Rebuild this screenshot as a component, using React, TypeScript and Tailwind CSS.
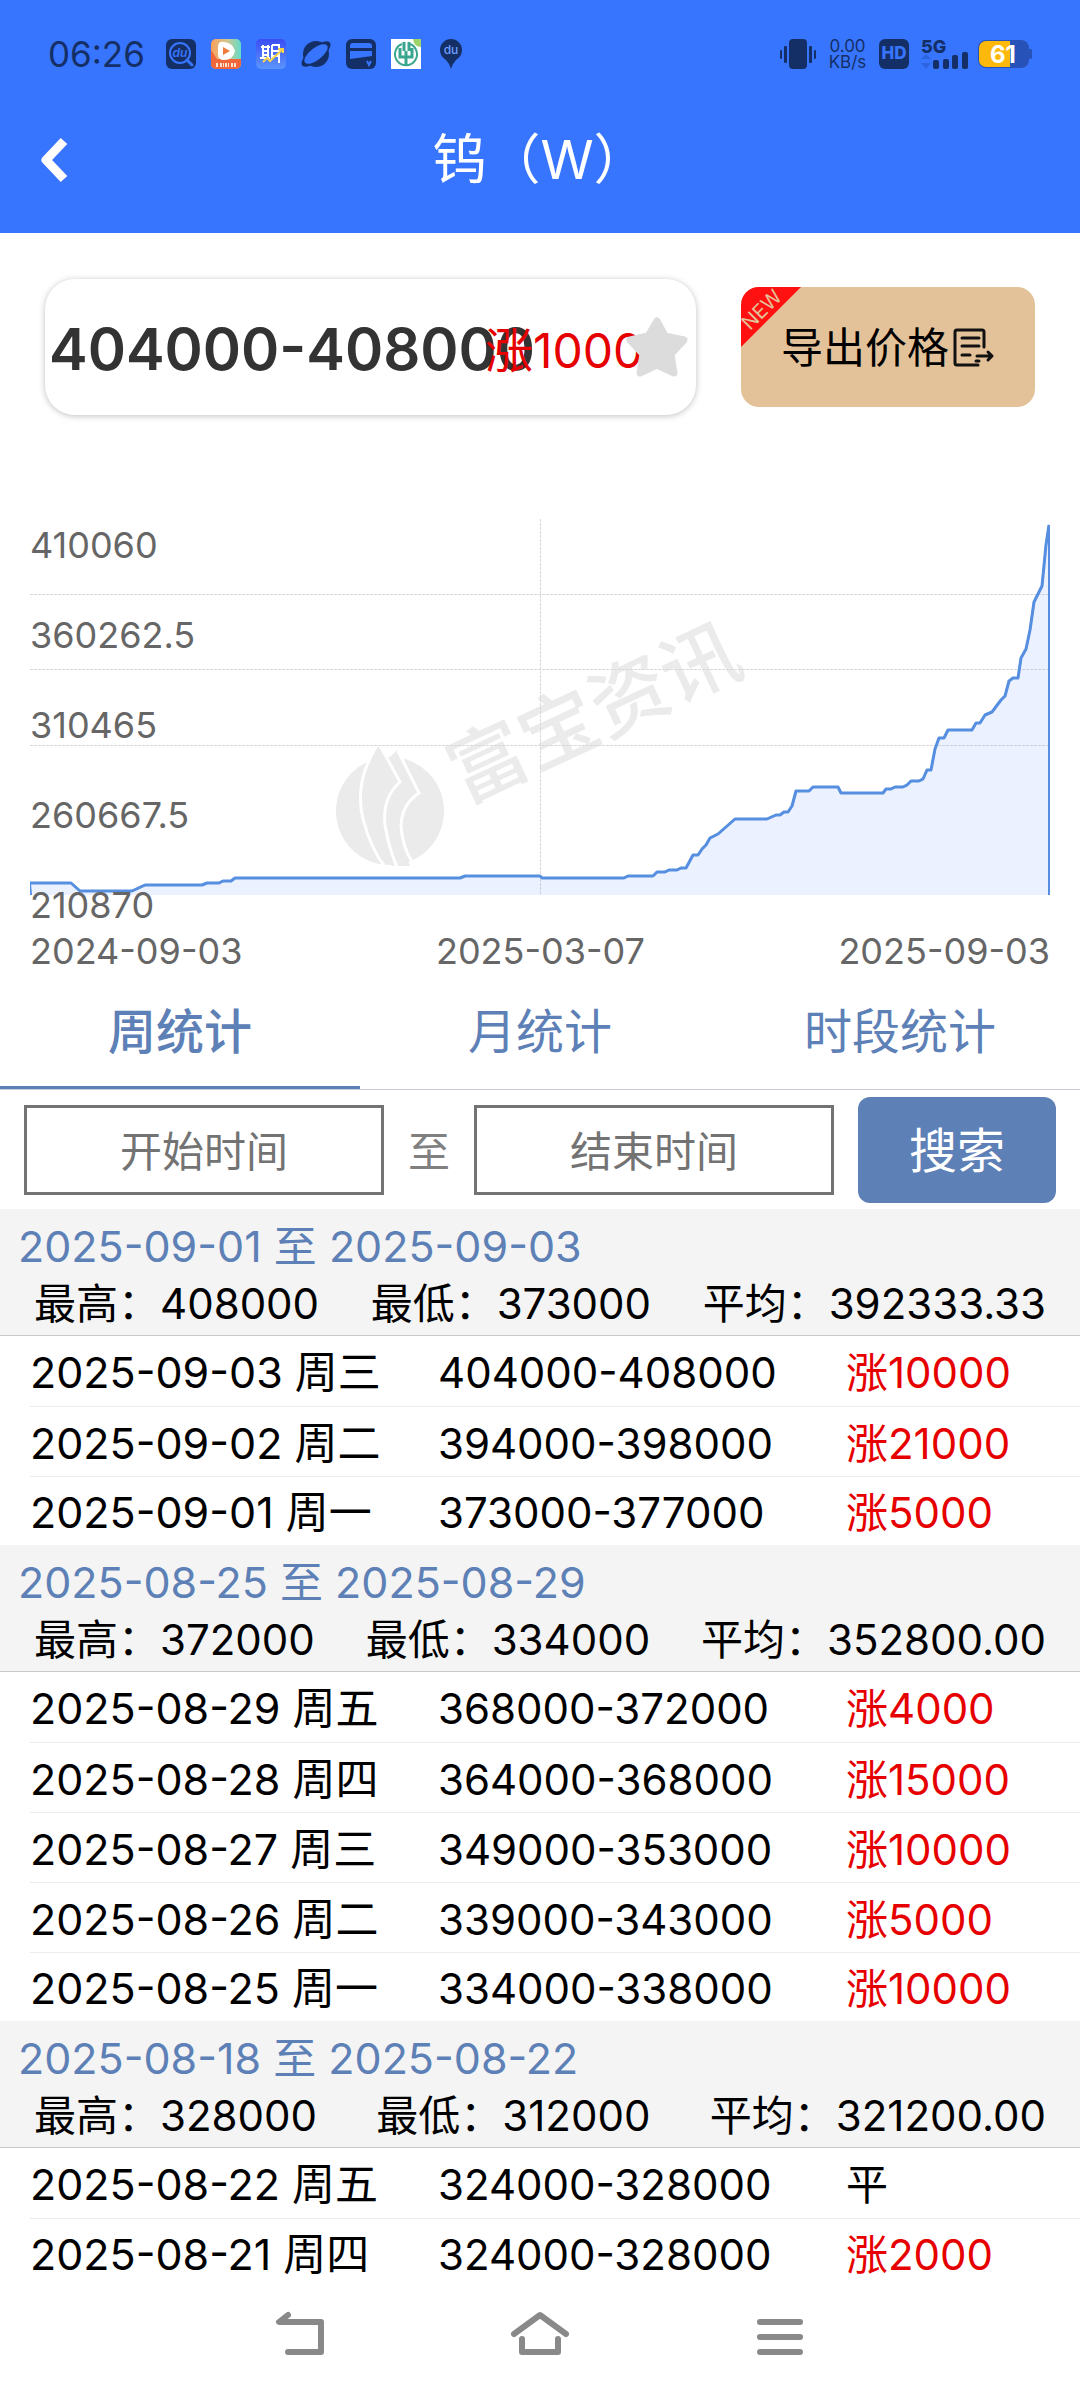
import React, { useState } from 'react';

const groups = [
  {
    start: '2025-09-01',
    end: '2025-09-03',
    high: '408000',
    low: '373000',
    average: '392333.33',
    days: [
      { date: '2025-09-03 周三', price: '404000-408000', change: '涨10000' },
      { date: '2025-09-02 周二', price: '394000-398000', change: '涨21000' },
      { date: '2025-09-01 周一', price: '373000-377000', change: '涨5000' },
    ],
  },
  {
    start: '2025-08-25',
    end: '2025-08-29',
    high: '372000',
    low: '334000',
    average: '352800.00',
    days: [
      { date: '2025-08-29 周五', price: '368000-372000', change: '涨4000' },
      { date: '2025-08-28 周四', price: '364000-368000', change: '涨15000' },
      { date: '2025-08-27 周三', price: '349000-353000', change: '涨10000' },
      { date: '2025-08-26 周二', price: '339000-343000', change: '涨5000' },
      { date: '2025-08-25 周一', price: '334000-338000', change: '涨10000' },
    ],
  },
  {
    start: '2025-08-18',
    end: '2025-08-22',
    high: '328000',
    low: '312000',
    average: '321200.00',
    days: [
      { date: '2025-08-22 周五', price: '324000-328000', change: '平' },
      { date: '2025-08-21 周四', price: '324000-328000', change: '涨2000' },
    ],
  },
];

const yLabels = ['410060', '360262.5', '310465', '260667.5', '210870'];
const xLabels = ['2024-09-03', '2025-03-07', '2025-09-03'];
const tabs = ['周统计', '月统计', '时段统计'];

const linePoints =
  '0,364 41,364 50,372 102,372 115,366 172,366 177,364 189,364 193,362 201,362 205,359 430,359 435,357 510,357 ' +
  '512,359 594,359 598,357 623,357 627,353 635,353 639,351 647,351 651,349 656,349 663,336 668,336 672,330 676,326 ' +
  '680,319 688,315 705,300 737,300 746,296 750,296 754,293 758,293 762,287 766,272 779,272 783,268 808,268 811,274 ' +
  '853,274 856,270 861,270 865,268 873,268 877,266 881,262 889,262 893,260 897,251 901,251 905,230 909,219 914,219 ' +
  '918,211 942,211 946,204 950,204 955,196 962,193 971,181 975,177 979,162 983,159 988,159 991,139 996,130 1000,111 ' +
  '1004,83 1008,75 1012,67 1016,26 1019,6';

const NotificationIcons = () => (
  <svg className="h-[30px] w-[297px]" viewBox="0 0 297 30" fill="none">
    {/* search */}
    <rect width="30" height="30" rx="6" fill="#142f66" />
    <circle cx="14" cy="14" r="10" stroke="#3875fe" strokeWidth="2" />
    <path d="M21 21l5 5" stroke="#3875fe" strokeWidth="3" strokeLinecap="round" />
    <text x="14" y="18" textAnchor="middle" fontSize="12" fontStyle="italic" fontWeight="600" fill="#3875fe">du</text>
    {/* video */}
    <defs>
      <linearGradient id="video" x1="0" y1="0" x2="1" y2="0">
        <stop offset="0" stopColor="#f9a15c" />
        <stop offset="0.5" stopColor="#d9c58a" />
        <stop offset="1" stopColor="#62dccb" />
      </linearGradient>
      <linearGradient id="futures" x1="0" y1="0" x2="0" y2="1">
        <stop offset="0" stopColor="#3b4cf5" />
        <stop offset="1" stopColor="#5b95fb" />
      </linearGradient>
    </defs>
    <rect x="45" width="30" height="30" rx="5" fill="url(#video)" />
    <path d="M45 11l6 9h24v5a5 5 0 0 1-5 5H50a5 5 0 0 1-5-5z" fill="#f2673a" />
    <path d="M52 8q0-6 6-5 9 1 11 9-2 9-11 9-6 0-6-6z" fill="#fff" />
    <path d="M57 8l7 4-7 4z" fill="#f07a3c" />
    <path d="M50 26h3m1 0h4m1 0h4m2 0h5" stroke="#fbe3d2" strokeWidth="4" strokeDasharray="2 1" />
    {/* futures */}
    <rect x="90" width="30" height="30" rx="5" fill="url(#futures)" />
    <path d="M95 8h9M97 6v12m5-12v12M97 12h5m-5 4h5m-8 3h10m2-13v14m0-14h7v18m-7-12h7m-7 5h7" stroke="#fff" strokeWidth="2" />
    <path d="M97 23l4-4 3 3 13-12m-5 0h5v4" stroke="#f3d34a" strokeWidth="2" />
    {/* planet */}
    <circle cx="150" cy="15" r="13" fill="#142f66" />
    <ellipse cx="150" cy="15" rx="18" ry="7" transform="rotate(-40 150 15)" fill="#142f66" />
    <ellipse cx="150" cy="15" rx="14" ry="6" transform="rotate(-38 150 15)" fill="#3875fe" />
    {/* card */}
    <rect x="180" width="30" height="30" rx="6" fill="#142f66" />
    <path d="M184 9V7q0-3 3-3h16q3 0 3 3v2zM184 12h22v5l-22 3z" fill="#3875fe" />
    <path d="M201 22l2 4 2-4" stroke="#3875fe" strokeWidth="2" />
    {/* bank */}
    <rect x="225" width="30" height="30" fill="#fff" />
    <path d="M247 0h8v8q-7 0-8-8z" fill="#9ed36a" />
    <path d="M236 5a11 11 0 1 0 8 0" stroke="#3aa68f" strokeWidth="2" />
    <path d="M240 12v15M238 3v9m5-9v9M234 9v9h12V9" stroke="#3aa68f" strokeWidth="3" />
    {/* map pin */}
    <path d="M285 0a11 11 0 0 1 11 11q0 6-6 10-4 4-5 9-1-5-5-9-6-4-6-10A11 11 0 0 1 285 0z" fill="#142f66" />
    <text x="285" y="15" textAnchor="middle" fontSize="12" fontWeight="500" fill="#6fa0ff">du</text>
  </svg>
);

const StatusBar = () => (
  <div className="flex h-[108px] items-center justify-between px-[48px] text-[#142f66]">
    <div className="flex items-center gap-[22px]">
      <span className="w-[96px] text-[35px] leading-none whitespace-nowrap">06:26</span>
      <NotificationIcons />
    </div>
    <div className="flex items-center gap-[9px]">
      <div className="flex items-center gap-[12px]">
        <svg className="h-[30px] w-[36px]" viewBox="0 0 36 30" fill="currentColor">
          <rect x="9" width="18" height="30" rx="4" />
          <rect x="0" y="11" width="2" height="9" rx="1" />
          <rect x="4" y="7" width="3" height="17" rx="1" />
          <rect x="29" y="7" width="3" height="17" rx="1" />
          <rect x="34" y="11" width="2" height="9" rx="1" />
        </svg>
        <div className="w-[39px] text-center text-[17px] leading-[16px] whitespace-nowrap">
          <div>0.00</div>
          <div>KB/s</div>
        </div>
        <div className="flex h-[30px] w-[30px] items-center justify-center rounded-[6px] bg-[#142f66] text-[17px] font-extrabold text-[#3875fe]">
          HD
        </div>
        <svg className="h-[30px] w-[48px] overflow-visible" viewBox="0 0 48 30" fill="currentColor">
          <text x="0" y="14" fontSize="18" fontWeight="800">5G</text>
          <path d="M5 15l5 5H0zM5 30l5-6H0z" fill="#2c64e0" />
          <rect x="12" y="21" width="6" height="9" rx="2" />
          <rect x="22" y="20" width="6" height="10" rx="2" />
          <rect x="31" y="16" width="6" height="14" rx="2" />
          <rect x="41" y="13" width="6" height="17" rx="2" />
        </svg>
      </div>
      <svg className="h-[28px] w-[54px]" viewBox="0 0 54 28">
        <rect width="51" height="28" rx="8" fill="#2753b8" />
        <rect x="51" y="9" width="3" height="10" rx="1" fill="#2753b8" />
        <path d="M32 1v26H8a7 7 0 0 1-7-7V8a7 7 0 0 1 7-7z" fill="#fdb90b" />
        <text x="25" y="23" textAnchor="middle" fontSize="24" fontWeight="700" fill="#fff">61</text>
      </svg>
    </div>
  </div>
);

const PriceChart = () => (
  <div className="relative px-[30px] pt-[19px]">
    <svg className="block h-auto w-full" viewBox="0 0 1020 376" fill="none">
      {/* Watermark */}
      <g fill="#ebebeb">
        <circle cx="360" cy="292" r="54" />
        <path d="M348 227q-22 36-14 70 6 32 28 50h18q-16-40-6-64l-2-22z" />
        <path d="M360 238l7-7 20 42-10 4z" />
        <text transform="translate(485 280) rotate(-25)" textAnchor="middle" x="108" y="-17" fontSize="78" fontWeight="500">富宝资讯</text>
      </g>
      <g stroke="#fff" strokeWidth="3">
        <path d="M346 228q-22 36-13 72 8 30 22 48" />
        <path d="M352 230l18 33q-18 16-15 43 4 24 12 42" />
        <path d="M368 232l21 42q-18 12-18 34 2 22 12 36" />
      </g>
      <path d="M0 75.5H1020M0 150.5H1020M0 226.5H1020M510.5 0V376" stroke="#d8d8d8" strokeDasharray="3 1" />
      <polygon points={`0,376 ${linePoints} 1019,376`} fill="#3875fe" fillOpacity="0.1" />
      <polyline points={`1,376 ${linePoints} 1019,376`} stroke="#578fe0" strokeWidth="2" />
      <polyline points={linePoints} stroke="#578fe0" strokeWidth="3" strokeLinejoin="round" />
    </svg>
    <div className="absolute top-0 left-[30px] text-[36px] text-[#666]">
      {yLabels.map((label) => (
        <div key={label} className="flex h-[90px] items-center">{label}</div>
      ))}
    </div>
    <div className="mt-[32px] flex justify-between text-[36px] leading-[48px] text-[#666]">
      {xLabels.map((label) => (
        <span key={label}>{label}</span>
      ))}
    </div>
  </div>
);

const WeekGroup = ({ group }) => (
  <section>
    <div className="border-b border-[#c8c7cc] bg-[#f4f4f4] pt-[9px] pb-[3px]">
      <h2 className="px-[18px] text-[43px] leading-[57px] text-[#5d80b6]">{group.start} 至 {group.end}</h2>
      <div className="flex justify-between px-[34px] leading-[57px]">
        <span>最高：{group.high}</span>
        <span>最低：{group.low}</span>
        <span>平均：{group.average}</span>
      </div>
    </div>
    <div className="pl-[30px]">
      <table className="w-full table-fixed border-collapse text-left">
        <tbody>
          {group.days.map((day) => (
            <tr key={day.date} className="h-[70px] border-b border-[#ececec] leading-[57px] last:h-[69px] last:border-b-0">
              <td className="w-102 p-0 pt-[4px] text-[43px]">{day.date}</td>
              <td className="w-102 p-0 pt-[4px]">{day.price}</td>
              <td className={day.change === '平' ? 'p-0 pt-[4px]' : 'p-0 pt-[4px] text-[#e60000]'}>
                {day.change}
              </td>
            </tr>
          ))}
        </tbody>
      </table>
    </div>
  </section>
);

const App = () => {
  const [activeTab, setActiveTab] = useState('周统计');
  const [start, setStart] = useState('');
  const [end, setEnd] = useState('');

  return (
    <div className="min-h-screen bg-white font-[Inter,'Noto_Sans_CJK_SC',sans-serif] text-[42px] text-black">
      {/* Header */}
      <header className="bg-[#3875fe] text-white">
        <StatusBar />
        <div className="grid h-[125px] grid-cols-[1fr_auto_1fr] items-center px-[39px] pb-[22px]">
          <button aria-label="返回" className="justify-self-start">
            <svg className="h-[46px] w-[30px]" viewBox="0 0 30 46" fill="none">
              <path d="M25 4L7 23l18 19" stroke="#fff" strokeWidth="9" strokeLinejoin="round" />
            </svg>
          </button>
          <h1 className="text-[54px] leading-none">钨（W）</h1>
        </div>
      </header>

      {/* Current price */}
      <div className="flex h-[267px] items-start justify-between px-[45px] pt-[46px]">
        <div className="relative flex h-[136px] w-[651px] items-center rounded-[30px] bg-white pt-[4px] pl-[4px] shadow-[0_1px_6px_rgba(0,0,0,0.25)]">
          <span className="text-[58px] leading-none font-semibold text-[#333]">404000-408000</span>
          <span className="absolute top-[42px] left-[440px] text-[48px] leading-[60px] text-[#e60000]">涨1000</span>
          <button aria-label="收藏" className="absolute top-[38px] right-[8px]">
            <svg className="block h-[60px] w-[62px]" viewBox="0 0 62 60">
              <path
                d="M31 4l8 15 19 4-13 14 3 19-17-8-17 8 3-19L4 23l18-4z"
                fill="#dcdcdc"
                stroke="#dcdcdc"
                strokeWidth="7"
                strokeLinejoin="round"
              />
            </svg>
          </button>
        </div>
        <button className="relative mt-[8px] flex h-[120px] w-[294px] items-center justify-center gap-[4px] overflow-hidden rounded-[18px] bg-[#e3c299] text-[42px]">
          导出价格
          <svg className="h-[40px] w-[42px]" viewBox="0 0 42 40" fill="none" stroke="#111" strokeWidth="3" strokeLinecap="round" strokeLinejoin="round">
            <path d="M31 20V5q0-2-2-2H4Q2 3 2 5v31q0 2 2 2h21M9 11h17M9 19h17M9 28h8M24 29h15M35 25l4 4-4 4M23 34h3" />
          </svg>
          <svg className="absolute top-0 left-0 h-[60px] w-[60px]" viewBox="0 0 60 60">
            <path d="M0 0h60L0 60z" fill="#f11" />
            <text transform="translate(22 24) rotate(-45)" textAnchor="middle" y="5" fontSize="20" fill="#e3c299">NEW</text>
          </svg>
        </button>
      </div>

      <PriceChart />

      {/* Tabs */}
      <div role="tablist" className="mt-[5px] grid grid-cols-3 border-b border-[#c8cdd4] text-[48px] text-[#5d80b6]">
        {tabs.map((tab) => (
          <button
            key={tab}
            role="tab"
            aria-selected={tab === activeTab}
            onClick={() => setActiveTab(tab)}
            className={
              tab === activeTab
                ? 'h-[109px] border-b-3 border-[#5d80b6] pb-[2px] leading-[100px] font-medium'
                : 'h-[109px] border-b-3 border-transparent pb-[2px] leading-[100px]'
            }
          >
            {tab}
          </button>
        ))}
      </div>

      {/* Date search */}
      <form className="flex h-[119px] items-center px-[24px]" onSubmit={(e) => e.preventDefault()}>
        <input
          aria-label="开始时间"
          placeholder="开始时间"
          value={start}
          onChange={(e) => setStart(e.target.value)}
          className="h-[90px] min-w-0 flex-1 border-3 border-[#737373] pt-[4px] text-center placeholder:text-[#737373]"
        />
        <span className="w-[90px] pt-[4px] text-center text-[#808080]">至</span>
        <input
          aria-label="结束时间"
          placeholder="结束时间"
          value={end}
          onChange={(e) => setEnd(e.target.value)}
          className="h-[90px] min-w-0 flex-1 border-3 border-[#737373] pt-[4px] text-center placeholder:text-[#737373]"
        />
        <button className="ml-[24px] h-[106px] w-[198px] rounded-[12px] bg-[#5d80b6] pt-[2px] text-[48px] text-white">
          搜索
        </button>
      </form>

      {groups.map((group) => (
        <WeekGroup key={group.start} group={group} />
      ))}

      {/* System navigation */}
      <nav className="flex justify-center gap-[182px] bg-white pt-[24px] pb-[40px]">
        <button aria-label="后退">
          <svg className="block h-[48px] w-[58px]" viewBox="0 0 58 48" fill="none" stroke="#898989" strokeWidth="6" strokeLinecap="round" strokeLinejoin="round">
            <path d="M17 4L8 11h42v30H17" />
          </svg>
        </button>
        <button aria-label="主页">
          <svg className="block h-[48px] w-[58px]" viewBox="0 0 58 48" fill="none" stroke="#898989" strokeWidth="6" strokeLinecap="round" strokeLinejoin="round">
            <path d="M3 23L29 4l26 19M11 28v13h36V28" />
          </svg>
        </button>
        <button aria-label="最近任务">
          <svg className="block h-[48px] w-[58px]" viewBox="0 0 58 48" fill="none" stroke="#898989" strokeWidth="6" strokeLinecap="round">
            <path d="M9 11h40M9 26h40M9 41h40" />
          </svg>
        </button>
      </nav>
    </div>
  );
};

export default App;
